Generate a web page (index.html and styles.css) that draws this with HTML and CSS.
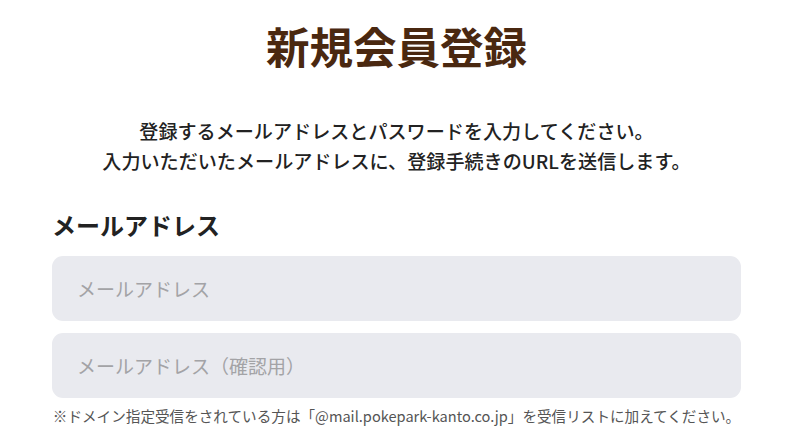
FILE: index.html
```html
<!DOCTYPE html>
<html lang="ja">
<head>
<meta charset="utf-8">
<link rel="stylesheet" href="styles.css">
</head>
<body>
<main class="page">
  <h1 class="title">新規会員登録</h1>
  <p class="lead">登録するメールアドレスとパスワードを入力してください。<br>入力いただいたメールアドレスに、登録手続きのURLを送信します。</p>
  <section class="field">
    <h2 class="label">メールアドレス</h2>
    <div class="inputs">
      <input class="input" type="email" placeholder="メールアドレス">
      <input class="input" type="email" placeholder="メールアドレス（確認用）">
    </div>
    <p class="note">※ドメイン指定受信をされている方は「@mail.pokepark-kanto.co.jp」を受信リストに加えてください。</p>
  </section>
</main>
</body>
</html>
```

FILE: styles.css
```css
* { box-sizing: border-box; }
html, body { margin: 0; padding: 0; background: #fff; }
body {
  font-family: "Noto Sans CJK JP", "Noto Sans", sans-serif;
  color: #222;
}
.page {
  width: 689px;
  margin: 0 auto;
  padding-top: 18px;
}
.title {
  margin: 0;
  text-align: center;
  font-size: 43.5px;
  line-height: 56px;
  font-weight: 700;
  color: #4a2810;
}
.lead {
  margin: 42px 0 0;
  text-align: center;
  font-size: 19.1px;
  line-height: 30px;
  font-weight: 500;
  color: #222;
}
.field { margin-top: 32px; }
.label {
  margin: 0;
  font-size: 24px;
  line-height: 34px;
  font-weight: 700;
  color: #222;
}
.inputs {
  display: flex;
  flex-direction: column;
  gap: 12px;
  margin-top: 14px;
}
.input {
  display: block;
  width: 100%;
  height: 65px;
  border: none;
  border-radius: 11px;
  background: #e9eaef;
  padding: 0 25px;
  font-family: inherit;
  font-size: 19px;
  color: #222;
  outline: none;
}
.input::placeholder { color: #a3a3a6; }
.note {
  margin: 8px 0 0;
  text-align: center;
  font-size: 14.6px;
  line-height: 20px;
  color: #555;
  white-space: nowrap;
}
```
